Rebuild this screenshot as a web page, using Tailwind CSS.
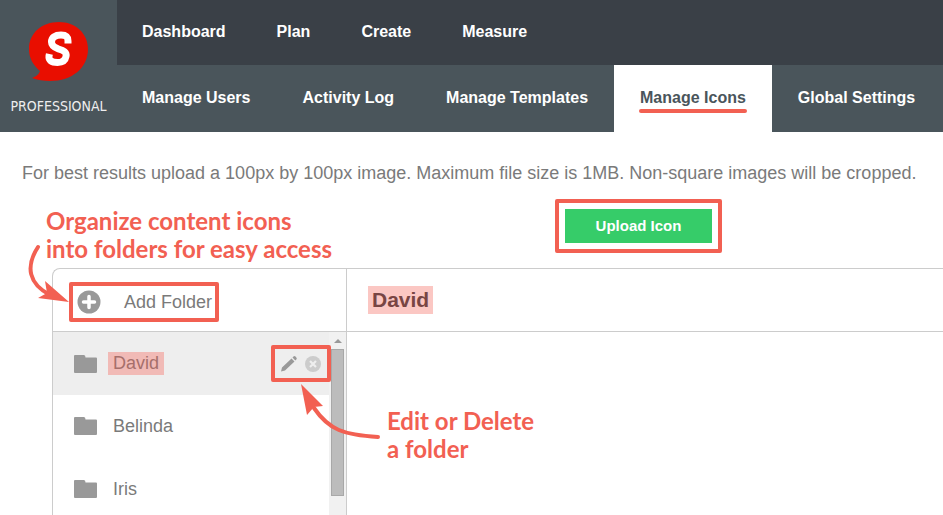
<!DOCTYPE html>
<html lang="en">
<head>
<meta charset="utf-8">
<meta name="viewport" content="width=device-width, initial-scale=1">
<title>Manage Icons</title>
<script src="https://cdn.jsdelivr.net/npm/@tailwindcss/browser@4"></script>
</head>
<body class="relative flex h-screen flex-col overflow-hidden bg-white font-['Liberation_Sans',Arial,sans-serif] text-lg text-[#7a7a7a]">
<header class="flex shrink-0 bg-[#4a555b] text-base font-bold text-white">
  <a href="#" class="flex w-[117px] shrink-0 flex-col items-center pt-[21px]">
    <svg class="h-[61px] w-[60px]" viewBox="0 0 60 61" aria-hidden="true">
      <path fill="#e90e00" d="M30 1C13 1 0 12 0 28c0 9 4 16 11 22-1 3-3 5-8 7 5 2 12 3 18 3C43 60 59 47 59 28 59 12 46 1 30 1Z"/>
      <path fill="none" stroke="#fff" stroke-width="7" d="M39 22.500V20c0-4-2-6-7-6-6 0-9.500 2.500-9.500 7 0 4 3 5.500 7 7 5 1.500 8.500 3 7.500 7.500-.8 4.500-4 6-8.500 6-6 0-9-2-8.500-6.500l.4-2"/>
    </svg>
    <span class="mt-3 font-['Liberation_Sans_Narrow','DejaVu_Sans_Condensed',sans-serif] text-sm leading-6 font-normal text-[#eee]">PROFESSIONAL</span>
  </a>
  <div class="min-w-0 flex-1">
    <nav aria-label="Main" class="flex h-[65px] items-center gap-px bg-[#3a4047] pb-0.5 whitespace-nowrap">
      <a href="#" class="px-[25px]">Dashboard</a>
      <a href="#" class="px-[25px]">Plan</a>
      <a href="#" class="px-[25px]">Create</a>
      <a href="#" class="px-[25px]">Measure</a>
    </nav>
    <nav aria-label="Settings" class="flex h-[67px] whitespace-nowrap">
      <a href="#" class="flex items-center pr-[26px] pb-0.5 pl-[25px]">Manage Users</a>
      <a href="#" class="flex items-center px-[26px] pb-0.5">Activity Log</a>
      <a href="#" class="flex items-center px-[26px] pb-0.5">Manage Templates</a>
      <a href="#" aria-current="page" class="relative flex items-center bg-white px-[26px] pb-0.5 text-[#4a555b]">Manage Icons
        <span class="absolute inset-x-[25px] top-11 h-1 rounded-full bg-[#f26052]"></span></a>
      <a href="#" class="flex items-center px-[26px] pb-0.5">Global Settings</a>
    </nav>
  </div>
</header>

<main class="flex min-h-0 flex-1 flex-col pt-7">
  <p class="pl-[22px] leading-[27px] whitespace-nowrap">For best results upload a 100px by 100px image. Maximum file size is 1MB. Non-square images will be cropped.</p>
  <div class="flex items-start pt-3 pb-[5px] text-[#f26052]">
    <p class="w-[555px] shrink-0 pt-2 pl-[46px] font-['Lato',sans-serif] text-2xl/7 font-bold">Organize content icons<br>into folders for easy access</p>
    <div class="rounded-xs border-4 border-[#f26052] p-1.5">
      <button type="button" class="block h-[34px] w-[147px] bg-[#36cc69] text-[15px] font-bold text-white">Upload Icon</button>
    </div>
  </div>

  <div class="ml-[52px] flex min-h-0 flex-1 rounded-tl-lg border-t border-l border-[#ccc]">
    <aside class="flex w-[294px] shrink-0 flex-col border-r border-[#ccc]">
      <div class="flex h-[63px] shrink-0 items-center border-b border-[#ccc] pt-1 pl-4">
        <button type="button" class="flex h-10 w-[150px] items-center gap-[23px] rounded-xs border-4 border-[#f26052] pl-1 whitespace-nowrap">
          <svg class="size-6 shrink-0" viewBox="0 0 24 24" aria-hidden="true"><circle cx="12" cy="12" r="11.500" fill="#999"/><path stroke="#fff" stroke-width="3.500" stroke-linecap="round" d="M12 6.500v11M6.500 12h11"/></svg>
          Add Folder
        </button>
      </div>
      <div class="flex min-h-0 flex-1 overflow-hidden">
        <ul class="relative z-10 min-w-0 flex-1">
          <li class="flex h-[63px] items-center bg-[#eee] pl-[21px]">
            <svg class="h-[18px] w-6 shrink-0" viewBox="0 0 24 18" aria-hidden="true"><path fill="#999" d="M0 1Q0 0 1 0h9q1.500 0 1.500 2.500h10.500q1 0 1 1V17q0 1-1 1H1q-1 0-1-1Z"/></svg>
            <mark class="ml-[10px] bg-[#f1bab6] px-[5px] leading-[23px] text-[#a66f6b]">David</mark>
            <div class="-mr-0.5 ml-auto flex h-[37px] w-[60px] shrink-0 items-center justify-center gap-2 rounded-xs border-4 border-[#f26052]">
              <button type="button" aria-label="Edit folder"><svg class="size-4" viewBox="0 0 16 16"><path fill="#999" d="m0 15.500 1-4L10.500 2.500l3 3L4 14.500Z M11.500 1.500 12.500.5q1-.8 2 .1l.8.8q.9 1 0 2l-1 1Z"/></svg></button>
              <button type="button" aria-label="Delete folder"><svg class="size-4" viewBox="0 0 16 16"><circle cx="8" cy="8" r="8" fill="#ccc"/><path stroke="#eee" stroke-width="2.200" d="m5 5 6 6m0-6-6 6"/></svg></button>
            </div>
          </li>
          <li class="flex h-[63px] items-center pb-0.5 pl-[21px]">
            <svg class="h-[18px] w-6 shrink-0" viewBox="0 0 24 18" aria-hidden="true"><path fill="#999" d="M0 1Q0 0 1 0h9q1.500 0 1.500 2.500h10.500q1 0 1 1V17q0 1-1 1H1q-1 0-1-1Z"/></svg>
            <span class="ml-[15px]">Belinda</span>
          </li>
          <li class="flex h-[63px] items-center pb-0.5 pl-[21px]">
            <svg class="h-[18px] w-6 shrink-0" viewBox="0 0 24 18" aria-hidden="true"><path fill="#999" d="M0 1Q0 0 1 0h9q1.500 0 1.500 2.500h10.500q1 0 1 1V17q0 1-1 1H1q-1 0-1-1Z"/></svg>
            <span class="ml-[15px]">Iris</span>
          </li>
        </ul>
        <div class="flex w-[17px] shrink-0 flex-col items-center bg-[#f1f1f1]">
          <svg class="h-[17px] w-2 shrink-0" viewBox="0 0 8 17" aria-hidden="true"><path fill="#999" d="M0 11 4 7l4 4Z"/></svg>
          <div class="h-[147px] w-[13px] shrink-0 border border-[#a8a8a8] bg-[#bcbcbc]"></div>
        </div>
      </div>
    </aside>
    <section class="min-w-0 flex-1">
      <div class="flex h-[63px] items-center border-b border-[#ccc] pl-[21px]">
        <h1 class="bg-[#fbc7c3] px-1 text-[21px] leading-7 font-bold text-[#784543]">David</h1>
      </div>
      <p class="pt-[75px] pl-10 font-['Lato',sans-serif] text-2xl/7 font-bold text-[#f26052]">Edit or Delete<br>a folder</p>
    </section>
  </div>
</main>

<!-- Callout arrows -->
<svg class="pointer-events-none absolute top-[243px] left-[26px] z-20 h-[64px] w-[46px]" viewBox="26 243 46 64" aria-hidden="true">
  <path fill="none" stroke="#f26052" stroke-width="4" stroke-linecap="round" d="M38 247C25 267 29 284 50 295"/>
  <path fill="#f26052" d="m45 281 24 21-31-4 9-5Z"/>
</svg>
<svg class="pointer-events-none absolute top-[383px] left-[298px] z-20 h-[58px] w-[84px]" viewBox="298 383 84 58" aria-hidden="true">
  <path fill="none" stroke="#f26052" stroke-width="4" stroke-linecap="round" d="M378 437C344 435 329 430 314 408"/>
  <path fill="#f26052" d="m301 384 22 22-9 1-7 8Z"/>
</svg>
</body>
</html>
